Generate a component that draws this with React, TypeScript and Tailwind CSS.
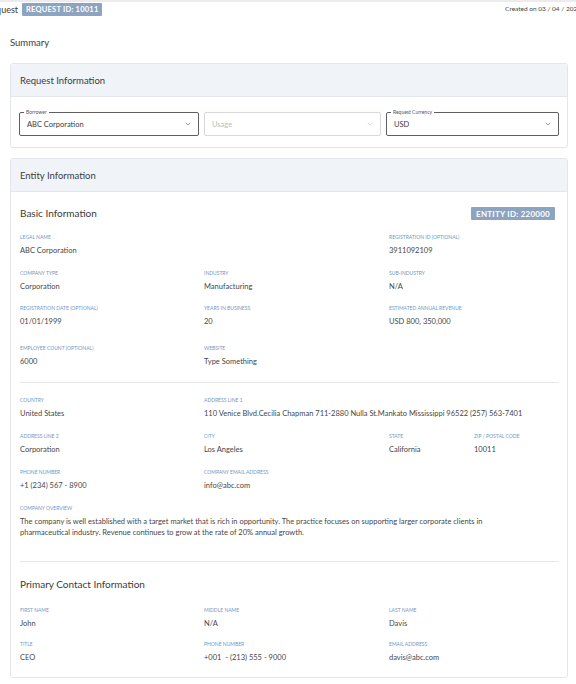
import { ChevronDown } from 'lucide-react';

const font = { fontFamily: '"Lato", "Noto Sans", sans-serif' };

type Field = { label: string; value: string; span?: string };

function Item({ label, value, span }: Field) {
  return (
    <div className={span}>
      <div className="text-[5px] leading-[7px] uppercase text-[#7098c4]">{label}</div>
      <div className="mt-[5px] text-[7.5px] leading-[10px] text-[#464646] whitespace-pre">{value}</div>
    </div>
  );
}

function Select({ label, value, disabled }: { label?: string; value: string; disabled?: boolean }) {
  return (
    <div
      className={
        'relative h-[24px] rounded-[2px] border flex items-center justify-between pl-[7px] pr-[6px] ' +
        (disabled ? 'border-[#d9d9d9]' : 'border-[#5f5f5f]')
      }
    >
      {label && (
        <span className="absolute left-[4px] top-[-4px] bg-white px-[2px] text-[5px] leading-[6px] text-[#555]">
          {label}
        </span>
      )}
      <span className={'text-[7.5px] ' + (disabled ? 'text-[#bcbcbc]' : 'text-[#3a3a3a]')}>{value}</span>
      <ChevronDown className={'h-[8px] w-[8px] ' + (disabled ? 'text-[#c8c8c8]' : 'text-[#555]')} strokeWidth={1.75} />
    </div>
  );
}

function Card({ title, children }: { title: string; children: React.ReactNode }) {
  return (
    <div className="ml-[10px] mr-[8px] rounded-[3px] border border-[#e3e6ea] bg-white">
      <div className="h-[33px] flex items-center px-[9px] bg-[#f0f4f8] border-b border-[#e3e6ea] rounded-t-[3px]">
        <span className="text-[9.5px] leading-[12px] mt-[2px] text-[#3b3b3b]">{title}</span>
      </div>
      {children}
    </div>
  );
}

export default function App() {
  return (
    <div className="min-h-screen bg-white overflow-hidden" style={font}>
      <div className="h-[19px] border-t-2 border-[#ececec] flex items-start justify-between">
        <div className="flex items-center ml-[-14px] mt-[1px]">
          <span className="text-[9px] text-[#3a3a3a]">Request</span>
          <span className="ml-[4px] h-[13px] px-[4px] flex items-center rounded-[1px] bg-[#8ca4bf] text-white text-[7.5px] font-bold tracking-[0.03em]">
            REQUEST ID: 10011
          </span>
        </div>
        <span className="mr-[-5px] mt-[2px] text-[6.5px] text-[#444]">Created on 03 / 04 / 2020</span>
      </div>

      <div className="mt-[17px] ml-[10px] text-[9.5px] text-[#3a3a3a]">Summary</div>

      <div className="mt-[13px]">
        <Card title="Request Information">
          <div className="grid grid-cols-[180px_177px_1fr] gap-[5px] px-[8px] pt-[15px] pb-[11px]">
            <Select label="Borrower" value="ABC Corporation" />
            <Select value="Usage" disabled />
            <Select label="Request Currency" value="USD" />
          </div>
        </Card>
      </div>

      <div className="mt-[10px]">
        <Card title="Entity Information">
          <div className="pl-[9px] pr-[8px] pt-[15px] pb-[14px]">
            <div className="flex items-center justify-between pr-[4px]">
              <span className="text-[10px] leading-[13px] text-[#3a3a3a]">Basic Information</span>
              <span className="h-[13px] px-[5px] flex items-center rounded-[1px] bg-[#8ca4bf] text-white text-[8px] font-bold tracking-[0.03em]">
                ENTITY ID: 220000
              </span>
            </div>

            <div className="mt-[14px] grid grid-cols-[184px_185px_85px_85px] gap-y-[13.5px]">
              <Item label="Legal Name" value="ABC Corporation" span="col-span-2" />
              <Item label="Registration ID (Optional)" value="3911092109" span="col-span-2" />
              <Item label="Company Type" value="Corporation" />
              <Item label="Industry" value="Manufacturing" />
              <Item label="Sub-Industry" value="N/A" span="col-span-2" />
              <Item label="Registration Date (Optional)" value="01/01/1999" />
              <Item label="Years in Business" value="20" />
              <Item label="Estimated Annual Revenue" value="USD 800, 350,000" span="col-span-2" />
              <Item label="Employee Count (Optional)" value="6000" span="mt-[4px]" />
              <Item label="Website" value="Type Something" span="col-span-3 mt-[4px]" />
            </div>

            <div className="mt-[15px] border-t border-[#e6e6e6]" />

            <div className="mt-[14px] grid grid-cols-[184px_185px_85px_85px] gap-y-[14px]">
              <Item label="Country" value="United States" />
              <Item
                label="Address Line 1"
                value="110 Venice Blvd.Cecilia Chapman 711-2880 Nulla St.Mankato Mississippi 96522 (257) 563-7401"
                span="col-span-3"
              />
              <Item label="Address Line 2" value="Corporation" />
              <Item label="City" value="Los Angeles" />
              <Item label="State" value="California" />
              <Item label="ZIP / Postal Code" value="10011" />
              <Item label="Phone Number" value="+1 (234) 567 - 8900" />
              <Item label="Company Email Address" value="info@abc.com" span="col-span-3" />
              <div className="col-span-4">
                <div className="text-[5px] leading-[7px] uppercase text-[#7098c4]">Company Overview</div>
                <div className="mt-[4px] text-[7.5px] leading-[11px] text-[#464646]">
                  The company is well established with a target market that is rich in opportunity. The practice focuses on supporting larger corporate clients in
                  <br />
                  pharmaceutical industry. Revenue continues to grow at the rate of 20% annual growth.
                </div>
              </div>
            </div>

            <div className="mt-[23px] border-t border-[#e6e6e6]" />

            <div className="mt-[16px] text-[10px] leading-[13px] text-[#3a3a3a]">Primary Contact Information</div>

            <div className="mt-[16px] grid grid-cols-[184px_185px_170px] gap-y-[12.5px]">
              <Item label="First Name" value="John" />
              <Item label="Middle Name" value="N/A" />
              <Item label="Last Name" value="Davis" />
              <Item label="Title" value="CEO" />
              <Item label="Phone Number" value="+001  - (213) 555 - 9000" />
              <Item label="Email Address" value="davis@abc.com" />
            </div>
          </div>
        </Card>
      </div>
    </div>
  );
}
